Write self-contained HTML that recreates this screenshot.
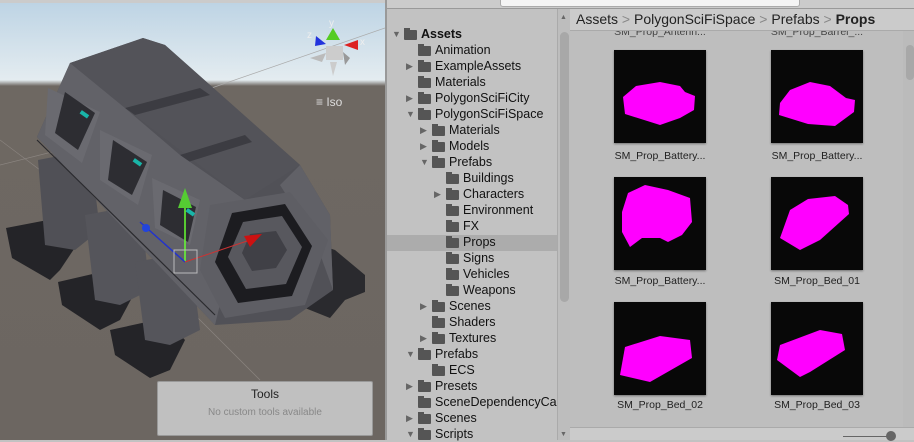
<!DOCTYPE html>
<html><head><meta charset="utf-8"><style>
*{margin:0;padding:0;box-sizing:border-box}
body{width:914px;height:440px;overflow:hidden;background:#c2c2c2;font-family:"Liberation Sans",sans-serif;position:relative}
.abs{position:absolute}
.row{position:absolute;left:386px;width:171px;height:16px;font-size:12.5px;line-height:16px;color:#111;white-space:nowrap;overflow:hidden}
.row .ar{position:absolute;top:0;font-size:9px;color:#666}
.row .fd{position:absolute;top:4px;width:13px;height:10px;background:#555;border-radius:1px}
.row .fd:before{content:"";position:absolute;left:0;top:-2px;width:6px;height:3px;background:#555}
.row .tx{position:absolute;top:0}
.th{position:absolute;width:92px;height:93px;background:#080808;box-shadow:0 1px 2px rgba(0,0,0,.4)}
.lb{position:absolute;width:150px;text-align:center;font-size:10.5px;color:#222}
</style></head><body>
<div class="abs" style="left:0;top:0;width:385px;height:440px;overflow:hidden;background:linear-gradient(#bcd3e4 0,#e4ecf0 80px,#6e6862 86px,#6c6661 440px)">
<svg width="385" height="440" style="position:absolute;left:0;top:0">
<line x1="200" y1="92" x2="385" y2="28" stroke="#aaa" stroke-width="0.7"/>
<line x1="0" y1="165" x2="60" y2="150" stroke="#8a847f" stroke-width="0.7"/>
<line x1="0" y1="140" x2="40" y2="170" stroke="#8a847f" stroke-width="0.7"/>
<line x1="190" y1="310" x2="260" y2="380" stroke="#8a847f" stroke-width="0.7"/>
<!-- feet -->
<polygon points="6,228 58,218 80,240 60,270 50,280 12,258" fill="#242428"/>
<polygon points="58,282 110,270 135,292 120,320 100,330 62,305" fill="#242428"/>
<polygon points="110,330 165,318 185,340 170,370 150,378 115,355" fill="#242428"/>
<polygon points="320,245 335,250 365,275 365,292 345,300 330,318 305,308 310,280" fill="#2a2a2e"/>
<!-- legs -->
<polygon points="38,160 90,150 100,230 75,250 45,245" fill="#505056"/>
<polygon points="85,215 140,205 150,290 120,305 95,300" fill="#55555b"/>
<polygon points="135,262 190,252 200,330 170,345 145,340" fill="#55555b"/>
<!-- body silhouette -->
<polygon points="37,137 70,63 143,38 165,45 300,165 330,215 333,290 290,320 215,325" fill="#515157"/>
<!-- roof -->
<polygon points="70,63 143,38 165,45 300,165 245,200 125,108" fill="#535359"/>
<polygon points="125,108 200,88 210,95 135,115" fill="#3c3c42"/>
<polygon points="180,155 245,135 252,142 188,162" fill="#3c3c42"/>
<polygon points="300,165 330,215 333,290 315,240 280,185" fill="#616167"/>
<!-- window face -->
<polygon points="37,137 70,63 125,108 180,155 245,200 215,325" fill="#626268"/>
<polygon points="48,88 100,112 82,163 45,135" fill="#6a6a70"/>
<polygon points="100,130 152,155 138,205 100,180" fill="#6a6a70"/>
<polygon points="152,178 200,200 190,245 155,228" fill="#6a6a70"/>
<polygon points="65,92 95,113 78,150 55,133" fill="#2d2d32"/>
<polygon points="113,140 147,162 132,195 108,180" fill="#2d2d32"/>
<polygon points="163,190 196,207 188,242 160,225" fill="#2d2d32"/>
<line x1="37" y1="140" x2="215" y2="315" stroke="#2a2a2e" stroke-width="1.2"/>
<rect x="80" y="112" width="9" height="4" fill="#19b5a8" transform="rotate(35 84 114)"/>
<rect x="133" y="160" width="9" height="4" fill="#19b5a8" transform="rotate(35 137 162)"/>
<rect x="186" y="210" width="9" height="4" fill="#19b5a8" transform="rotate(35 190 212)"/>
<!-- hex face -->
<polygon points="210,205 290,192 328,240 305,305 225,318 200,270" fill="#5e5e64"/>
<polygon points="232,213 285,204 312,246 292,296 238,303 215,262" fill="#1c1c20"/>
<polygon points="243,222 282,216 302,247 286,284 246,289 228,257" fill="#58585e"/>
<polygon points="250,234 276,231 287,250 276,268 252,271 242,253" fill="#404046"/>
<!-- gizmo -->
<line x1="185" y1="262" x2="185" y2="205" stroke="#6f3" stroke-width="1.5"/>
<polygon points="185,188 178,208 192,208" fill="#5c3"/>
<line x1="185" y1="262" x2="140" y2="222" stroke="#23c" stroke-width="1.5"/>
<circle cx="146" cy="228" r="4" fill="#24d"/>
<line x1="185" y1="262" x2="250" y2="240" stroke="#c33" stroke-width="1"/>
<polygon points="262,234 244,236 250,247" fill="#c11"/>
<rect x="174" y="250" width="23" height="23" fill="none" stroke="#bbb" stroke-width="1"/>
<!-- axis widget -->
<polygon points="333,28 326,40 340,40" fill="#5c2"/>
<polygon points="316,36 315,46 326,44" fill="#23d"/>
<polygon points="358,40 344,45 358,50" fill="#d22"/>
<polygon points="326,46 343,46 343,60 326,60" fill="#ccc"/>
<polygon points="310,58 326,53 322,62" fill="#bbb"/>
<polygon points="350,58 343,52 345,65" fill="#999"/>
<polygon points="330,62 337,62 333,76" fill="#ccc"/>
<text x="329" y="26" font-size="10" fill="#eee" font-family="Liberation Sans">y</text>
<text x="307" y="38" font-size="10" fill="#eee" font-family="Liberation Sans">z</text>
<text x="360" y="45" font-size="10" fill="#eee" font-family="Liberation Sans">x</text>
</svg>
<div class="abs" style="left:316px;top:95px;font-size:12px;color:#ddd">≡ Iso</div>
<div class="abs" style="left:157px;top:381px;width:216px;height:55px;background:#c0c0c0;border:1px solid #999;border-radius:2px;text-align:center">
<div style="font-size:12px;color:#222;margin-top:5px">Tools</div>
<div style="font-size:10px;color:#888;margin-top:6px">No custom tools available</div></div>
</div>
<div class="abs" style="left:0;top:0;width:385px;height:3px;background:#cbcbcb"></div>
<div class="abs" style="left:385px;top:0;width:2px;height:440px;background:#999"></div>
<div class="abs" style="left:387px;top:0;width:527px;height:9px;background:#cbcbcb;border-bottom:1px solid #999"></div>
<div class="abs" style="left:500px;top:-6px;width:300px;height:13px;background:#f4f4f4;border:1px solid #aaa;border-radius:3px"></div>
<div class="abs" style="left:387px;top:9px;width:170px;height:431px;background:#c2c2c2"></div>
<div class="abs" style="left:387px;top:235px;width:170px;height:16px;background:#acacac"></div>
<div class="abs" style="left:557px;top:9px;width:13px;height:431px;background:#bdbdbd;border-left:1px solid #aaa"></div>
<div class="abs" style="left:560px;top:32px;width:9px;height:270px;background:#a8a8a8;border-radius:5px"></div>
<div class="abs" style="left:560px;top:14px;font-size:7px;color:#666">▲</div>
<div class="abs" style="left:560px;top:431px;font-size:7px;color:#666">▼</div>
<div id="tree"></div>
<script>
var items=[["Assets",0,"o",1],["Animation",1,""],["ExampleAssets",1,"c"],["Materials",1,""],["PolygonSciFiCity",1,"c"],["PolygonSciFiSpace",1,"o"],["Materials",2,"c"],["Models",2,"c"],["Prefabs",2,"o"],["Buildings",3,""],["Characters",3,"c"],["Environment",3,""],["FX",3,""],["Props",3,""],["Signs",3,""],["Vehicles",3,""],["Weapons",3,""],["Scenes",2,"c"],["Shaders",2,""],["Textures",2,"c"],["Prefabs",1,"o"],["ECS",2,""],["Presets",1,"c"],["SceneDependencyCache",1,""],["Scenes",1,"c"],["Scripts",1,"o"]];
var h="";items.forEach(function(it,i){var y=26+i*16,b=it[1]*14;var s='<div class="row" style="top:'+y+'px">';
if(it[2])s+='<span class="ar" style="left:'+(b+6)+'px">'+(it[2]=="o"?"▼":"▶")+'</span>';
s+='<span class="fd" style="left:'+(b+18)+'px"></span><span class="tx" style="left:'+(b+35)+'px;'+(it[3]?'font-weight:bold':'')+'">'+it[0]+'</span></div>';h+=s;});
document.getElementById("tree").innerHTML=h;
</script>
<div class="abs" style="left:570px;top:9px;width:344px;height:418px;background:#bebebe"></div>
<div class="lb" style="left:585px;top:26px;color:#444">SM_Prop_Antenn...</div>
<div class="lb" style="left:742px;top:26px;color:#444">SM_Prop_Barrel_...</div>
<div class="abs" style="left:570px;top:9px;width:344px;height:22px;background:#cbcbcb;border-bottom:1px solid #aaa;font-size:14px;line-height:20px;color:#222;padding-left:6px;white-space:nowrap">Assets <span style="color:#888">&gt;</span> PolygonSciFiSpace <span style="color:#888">&gt;</span> Prefabs <span style="color:#888">&gt;</span> <b>Props</b></div>
<div class="abs" style="left:903px;top:31px;width:11px;height:396px;background:#bbb"></div>
<div class="abs" style="left:906px;top:45px;width:8px;height:35px;background:#a8a8a8;border-radius:4px"></div>
<div class="th" style="left:614px;top:50px"></div><div class="th" style="left:771px;top:50px"></div>
<div class="th" style="left:614px;top:177px"></div><div class="th" style="left:771px;top:177px"></div>
<div class="th" style="left:614px;top:302px"></div><div class="th" style="left:771px;top:302px"></div>
<svg class="abs" style="left:0;top:0" width="914" height="440">
<g fill="#ff00ff">
<polygon points="623,97 636,86 660,82 680,86 685,92 695,96 694,110 680,118 660,125 625,114"/>
<polygon points="780,103 790,90 810,82 830,86 846,98 855,100 854,112 835,126 808,124 779,115"/>
<polygon points="622,212 628,193 645,185 668,190 690,198 692,222 682,235 668,242 660,238 642,238 630,247 622,232"/>
<polygon points="780,238 790,210 808,199 835,196 848,205 849,214 820,240 800,250"/>
<polygon points="620,375 625,347 660,336 690,340 692,358 650,382"/>
<polygon points="777,360 780,345 820,330 842,334 845,350 810,372 800,377"/>
</g></svg>
<div class="lb" style="left:585px;top:150px">SM_Prop_Battery...</div>
<div class="lb" style="left:742px;top:150px">SM_Prop_Battery...</div>
<div class="lb" style="left:585px;top:275px">SM_Prop_Battery...</div>
<div class="lb" style="left:742px;top:275px">SM_Prop_Bed_01</div>
<div class="lb" style="left:585px;top:399px">SM_Prop_Bed_02</div>
<div class="lb" style="left:742px;top:399px">SM_Prop_Bed_03</div>
<div class="abs" style="left:570px;top:427px;width:344px;height:13px;background:#cbcbcb;border-top:1px solid #aaa"></div>
<div class="abs" style="left:843px;top:436px;width:50px;height:1px;background:#666"></div>
<div class="abs" style="left:886px;top:431px;width:10px;height:10px;background:#666;border-radius:5px"></div>
</body></html>
